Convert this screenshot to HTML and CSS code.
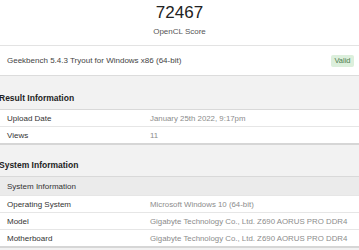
FILE: index.html
```html
<!DOCTYPE html>
<html lang="en">

<head>
    <meta charset="UTF-8">
    <meta name="viewport" content="width=device-width, initial-scale=1.0">
    <title>Geekbench Browser - OpenCL Score</title>
    <link rel="stylesheet" href="styles.css">
</head>

<body>
    <section class="score-box">
        <div class="score">72467</div>
        <div class="score-name">OpenCL Score</div>
    </section>

    <section class="version-row">
        <span class="version">Geekbench 5.4.3 Tryout for Windows x86 (64-bit)</span>
        <span class="badge">Valid</span>
    </section>

    <section class="content">
        <h3>Result Information</h3>
        <table class="info">
            <tr>
                <td class="name">Upload Date</td>
                <td class="value">January 25th 2022, 9:17pm</td>
            </tr>
            <tr>
                <td class="name">Views</td>
                <td class="value">11</td>
            </tr>
        </table>

        <h3>System Information</h3>
        <table class="info">
            <tr class="head">
                <td colspan="2">System Information</td>
            </tr>
            <tr>
                <td class="name">Operating System</td>
                <td class="value">Microsoft Windows 10 (64-bit)</td>
            </tr>
            <tr>
                <td class="name">Model</td>
                <td class="value">Gigabyte Technology Co., Ltd. Z690 AORUS PRO DDR4</td>
            </tr>
            <tr>
                <td class="name">Motherboard</td>
                <td class="value">Gigabyte Technology Co., Ltd. Z690 AORUS PRO DDR4</td>
            </tr>
        </table>
    </section>
</body>

</html>
```

FILE: styles.css
```css
body {
    margin: 0;
    padding: 0;
    background-color: #f2f2f2;
    font-family: "Liberation Sans", Arial, sans-serif;
    color: #333333;
}

.score-box {
    background-color: #ffffff;
    text-align: center;
    padding: 3px 0 8px;
    border-bottom: 1px solid #e3e3e3;
}

.score {
    font-size: 17px;
    line-height: 20px;
    color: #222222;
}

.score-name {
    font-size: 8px;
    line-height: 10px;
    margin-top: 4px;
    color: #555555;
}

.version-row {
    display: flex;
    align-items: center;
    justify-content: space-between;
    height: 29px;
    padding: 0 5px 0 7px;
    background-color: #ffffff;
    border-bottom: 1px solid #dcdcdc;
}

.version {
    font-size: 8px;
    color: #444444;
}

.badge {
    font-size: 7.5px;
    line-height: 12px;
    padding: 0 3.5px;
    border-radius: 2px;
    background-color: #dcefdc;
    color: #4f7d4f;
}

.content {
    padding-top: 17px;
}

.content h3 {
    margin: 0 0 5px -1px;
    font-size: 8.5px;
    line-height: 11px;
    font-weight: 700;
    color: #222222;
}

.content h3 + .info {
    margin-bottom: 15px;
}

.info {
    width: 100%;
    border-collapse: collapse;
    border-top: 1px solid #d9d9d9;
    border-bottom: 2px solid #d6d6d6;
    font-size: 8px;
}

.info td {
    height: 16px;
    padding: 0 0 0 7px;
    border-bottom: 1px solid #e6e6e6;
    background-color: #ffffff;
    white-space: nowrap;
}

.info .name {
    width: 136px;
    color: #333333;
}

.info .value {
    font-size: 7.85px;
    color: #8c8c8c;
}

.info .head td {
    height: 18px;
    background-color: #ebebeb;
    color: #333333;
}
```
